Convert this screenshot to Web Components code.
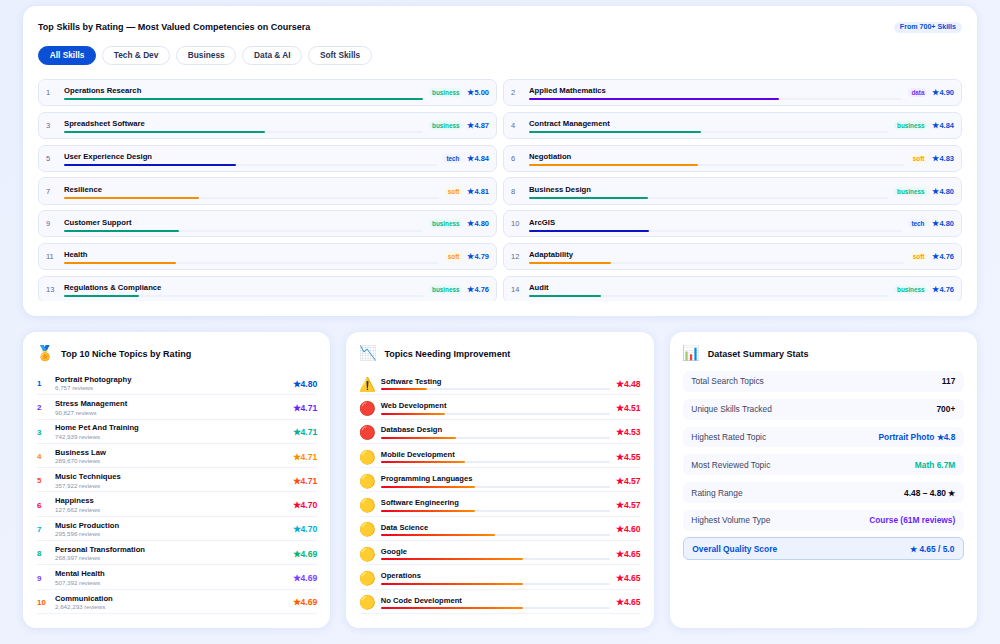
<!DOCTYPE html>
<html>
<head>
<meta charset="utf-8">
<style>
html, body { margin: 0; height: 100%; overflow: hidden; }
body {
    background: linear-gradient(135deg, #eaf0fd, #f0f4ff);
    font-family: "Liberation Sans", Arial, sans-serif;
    color: #0a0a23;
    padding: 6px 23px 0;
    box-sizing: border-box;
}
.bottom {
    display: grid;
    grid-template-columns: repeat(3, 1fr);
    gap: 16px;
    margin-top: 16px;
}
stat-row:first-child { margin-top: 1.5px; }
</style>
</head>
<body>
<skills-panel></skills-panel>
<div class="bottom">
    <info-card icon="🏅" heading="Top 10 Niche Topics by Rating" id="niche"></info-card>
    <info-card icon="📉" heading="Topics Needing Improvement" id="weak"></info-card>
    <info-card icon="📊" heading="Dataset Summary Stats" id="stats"></info-card>
</div>

<script>
const BLUE = '#0050d8'
const KINDS = {
    business: { bar: '#009e7c', text: '#00b894', bg: '#e8faf5' },
    tech: { bar: '#0a14c4', text: '#0050d8', bg: '#eef3fe' },
    data: { bar: '#5c00e6', text: '#7c2fff', bg: '#f3edff' },
    soft: { bar: '#f58e00', text: '#ff9800', bg: '#fff8e8' },
}

const SKILLS = [
    ['Operations Research', 'business', '5.00', 100],
    ['Applied Mathematics', 'data', '4.90', 67],
    ['Spreadsheet Software', 'business', '4.87', 56],
    ['Contract Management', 'business', '4.84', 48],
    ['User Experience Design', 'tech', '4.84', 46],
    ['Negotiation', 'soft', '4.83', 45],
    ['Resilience', 'soft', '4.81', 36],
    ['Business Design', 'business', '4.80', 33],
    ['Customer Support', 'business', '4.80', 32],
    ['ArcGIS', 'tech', '4.80', 32],
    ['Health', 'soft', '4.79', 30],
    ['Adaptability', 'soft', '4.76', 22],
    ['Regulations & Compliance', 'business', '4.76', 21],
    ['Audit', 'business', '4.76', 20],
]

const NICHE = [
    ['Portrait Photography', '6,757', '4.80', '#0050d8'],
    ['Stress Management', '90,827', '4.71', '#6a1fff'],
    ['Home Pet And Training', '742,939', '4.71', '#00b09b'],
    ['Business Law', '289,670', '4.71', '#ff8c00'],
    ['Music Techniques', '357,922', '4.71', '#ff4d1f'],
    ['Happiness', '127,662', '4.70', '#ff0033'],
    ['Music Production', '295,596', '4.70', '#00acd7'],
    ['Personal Transformation', '268,997', '4.69', '#00b37a'],
    ['Mental Health', '507,392', '4.69', '#7c3fff'],
    ['Communication', '2,642,293', '4.69', '#ff5a00'],
]

const WEAK = [
    ['⚠️', 'Software Testing', '4.48', 20],
    ['🔴', 'Web Development', '4.51', 28],
    ['🔴', 'Database Design', '4.53', 33],
    ['🟡', 'Mobile Development', '4.55', 37],
    ['🟡', 'Programming Languages', '4.57', 41],
    ['🟡', 'Software Engineering', '4.57', 41],
    ['🟡', 'Data Science', '4.60', 50],
    ['🟡', 'Google', '4.65', 62],
    ['🟡', 'Operations', '4.65', 62],
    ['🟡', 'No Code Development', '4.65', 62],
]

const STATS = [
    ['Total Search Topics', '117', '#0a0a23'],
    ['Unique Skills Tracked', '700+', '#0a0a23'],
    ['Highest Rated Topic', 'Portrait Photo ★4.8', BLUE],
    ['Most Reviewed Topic', 'Math 6.7M', '#00b894'],
    ['Rating Range', '4.48 – 4.80 ★', '#0a0a23'],
    ['Highest Volume Type', 'Course (61M reviews)', '#6a1fff'],
]

class TabPill extends HTMLElement {
    constructor() {
        super()
        this.root = this.attachShadow({mode: 'open'})
    }
    connectedCallback() {
        this.root.innerHTML = `
            <style>
            :host {
                display: block;
                height: 19px;
                line-height: 17px;
                padding: 0 10.8px;
                border: 1px solid #dfe5f5;
                border-radius: 10px;
                box-sizing: border-box;
                font-size: 8.3px;
                font-weight: 700;
                color: #2a3458;
                background: #fff;
            }
            :host([active]) { background: #0a4fd6; border-color: #0a4fd6; color: #fff; }
            </style>
            <slot></slot>
        `
    }
}

class SkillRow extends HTMLElement {
    constructor() {
        super()
        this.root = this.attachShadow({mode: 'open'})
    }
    connectedCallback() {
        const kind = KINDS[this.getAttribute('kind')]
        this.root.innerHTML = `
            <style>
            :host {
                display: flex;
                align-items: center;
                height: 27.3px;
                box-sizing: border-box;
                padding: 0 7px;
                border: 1px solid #e2e7f6;
                border-radius: 7px;
                background: #f8f9ff;
            }
            .num { width: 18px; flex: none; font-size: 7.5px; color: #5a6a92; }
            .main { flex: 1; min-width: 0; padding-top: 1.5px; }
            .name { font-size: 7.7px; font-weight: 700; line-height: 10px; color: #0a0a23; margin-bottom: 2px; }
            .track { height: 2px; border-radius: 2px; background: #eef1fb; }
            .fill { height: 100%; border-radius: 2px; background: ${kind.bar}; width: ${this.getAttribute('pct')}%; }
            .tag {
                flex: none;
                margin-left: 6px;
                padding: 0 3px;
                height: 9px;
                line-height: 9px;
                font-size: 6.3px;
                font-weight: 700;
                border-radius: 5px;
                color: ${kind.text};
                background: ${kind.bg};
            }
            .rate { flex: none; margin-left: 5px; font-size: 7.5px; font-weight: 700; color: ${BLUE}; }
            </style>
            <span class="num">${this.getAttribute('num')}</span>
            <div class="main">
                <div class="name"><slot></slot></div>
                <div class="track"><div class="fill"></div></div>
            </div>
            <span class="tag">${this.getAttribute('kind')}</span>
            <span class="rate">★${this.getAttribute('rate')}</span>
        `
    }
}

class SkillsPanel extends HTMLElement {
    constructor() {
        super()
        this.root = this.attachShadow({mode: 'open'})
    }
    connectedCallback() {
        const tabs = ['All Skills', 'Tech & Dev', 'Business', 'Data & AI', 'Soft Skills']
        this.root.innerHTML = `
            <style>
            :host {
                display: block;
                height: 310px;
                box-sizing: border-box;
                padding: 15px;
                background: #fff;
                border-radius: 13px;
                box-shadow: 0 1px 8px rgba(10, 71, 214, .09);
            }
            .head { display: flex; justify-content: space-between; align-items: center; height: 12px; }
            h2 { margin: 0; font-size: 9.04px; font-weight: 700; color: #0a0a23; }
            .badge {
                font-size: 7.1px;
                font-weight: 700;
                color: ${BLUE};
                background: #ebf2fe;
                border-radius: 6px;
                padding: 0 6px;
                line-height: 11px;
            }
            .tabs { display: flex; gap: 5.8px; margin-top: 13px; }
            .list {
                margin-top: 14px;
                height: 222px;
                overflow: hidden;
                display: grid;
                grid-template-columns: 1fr 1fr;
                gap: 5.5px 6px;
                align-content: start;
            }
            </style>
            <div class="head">
                <h2>Top Skills by Rating — Most Valued Competencies on Coursera</h2>
                <span class="badge">From 700+ Skills</span>
            </div>
            <div class="tabs">
                ${tabs.map((t, i) => `<tab-pill ${i === 0 ? 'active' : ''}>${t.replace('&', '&amp;')}</tab-pill>`).join('')}
            </div>
            <div class="list">
                ${SKILLS.map((s, i) => `<skill-row num="${i + 1}" kind="${s[1]}" rate="${s[2]}" pct="${s[3]}">${s[0].replace('&', '&amp;')}</skill-row>`).join('')}
            </div>
        `
    }
}

class InfoCard extends HTMLElement {
    constructor() {
        super()
        this.root = this.attachShadow({mode: 'open'})
    }
    connectedCallback() {
        this.root.innerHTML = `
            <style>
            :host {
                display: block;
                height: 296px;
                box-sizing: border-box;
                padding: 13px 13px 0;
                background: #fff;
                border-radius: 13px;
                box-shadow: 0 1px 8px rgba(10, 71, 214, .09);
            }
            .head { display: flex; align-items: center; gap: 7px; height: 18px; margin-bottom: 8px; }
            .icon { font-size: 14.5px; line-height: 18px; font-family: "Noto Color Emoji", sans-serif; }
            h3 { margin: 0; font-size: 9.04px; font-weight: 700; color: #0a0a23; }
            </style>
            <div class="head">
                <span class="icon">${this.getAttribute('icon')}</span>
                <h3>${this.getAttribute('heading')}</h3>
            </div>
            <slot></slot>
        `
    }
}

class NicheRow extends HTMLElement {
    constructor() {
        super()
        this.root = this.attachShadow({mode: 'open'})
    }
    connectedCallback() {
        const color = this.getAttribute('color')
        this.root.innerHTML = `
            <style>
            :host {
                display: flex;
                align-items: center;
                height: 24.3px;
                box-sizing: border-box;
                padding-top: 2px;
                border-bottom: 1px solid #f0f3fb;
                margin-left: 1px;
            }
            .num { width: 18px; flex: none; font-size: 8px; font-weight: 700; color: ${color}; }
            .main { flex: 1; min-width: 0; }
            .name { font-size: 7.65px; font-weight: 700; line-height: 8.5px; color: #0a0a23; }
            .sub { font-size: 6.2px; line-height: 7px; color: #8a94ae; }
            .rate { flex: none; font-size: 8.6px; font-weight: 700; color: ${color}; }
            </style>
            <span class="num">${this.getAttribute('num')}</span>
            <div class="main">
                <div class="name"><slot></slot></div>
                <div class="sub">${this.getAttribute('reviews')} reviews</div>
            </div>
            <span class="rate">★${this.getAttribute('rate')}</span>
        `
    }
}

class WeakRow extends HTMLElement {
    constructor() {
        super()
        this.root = this.attachShadow({mode: 'open'})
    }
    connectedCallback() {
        this.root.innerHTML = `
            <style>
            :host {
                display: flex;
                align-items: center;
                height: 24.3px;
                box-sizing: border-box;
                padding-top: 2px;
                border-bottom: 1px solid #f0f3fb;
            }
            .icon { width: 21.5px; flex: none; font-size: 13.5px; line-height: 16px; font-family: "Noto Color Emoji", sans-serif; }
            .main { flex: 1; min-width: 0; }
            .name { font-size: 7.6px; font-weight: 700; line-height: 10px; color: #0a0a23; margin-bottom: 1.5px; }
            .track { height: 2px; border-radius: 2px; background: #e9eefb; }
            .fill { height: 100%; border-radius: 2px; width: ${this.getAttribute('pct')}%; background: linear-gradient(90deg, #ee0022, #ff8c00); }
            .rate { flex: none; width: 25px; margin-left: 6px; text-align: right; white-space: nowrap; font-size: 8.6px; font-weight: 700; color: #ff0033; }
            </style>
            <span class="icon">${this.getAttribute('icon')}</span>
            <div class="main">
                <div class="name"><slot></slot></div>
                <div class="track"><div class="fill"></div></div>
            </div>
            <span class="rate">★${this.getAttribute('rate')}</span>
        `
    }
}

class StatRow extends HTMLElement {
    constructor() {
        super()
        this.root = this.attachShadow({mode: 'open'})
    }
    connectedCallback() {
        this.root.innerHTML = `
            <style>
            :host {
                display: flex;
                justify-content: space-between;
                align-items: center;
                height: 20.8px;
                box-sizing: border-box;
                padding: 0 8.7px;
                margin-bottom: 7px;
                border-radius: 6px;
                background: #f8f9ff;
                font-size: 8.4px;
            }
            :host([total]) {
                height: 23px;
                background: #edf3fe;
                border: 1px solid #bcd2f7;
                color: ${BLUE};
                font-weight: 700;
                margin-top: -0.5px;
            }
            .label { color: #3a4468; }
            :host([total]) .label { color: ${BLUE}; }
            .value { font-weight: 700; color: ${this.getAttribute('color') || BLUE}; }
            </style>
            <span class="label"><slot></slot></span>
            <span class="value">${this.getAttribute('value')}</span>
        `
    }
}

customElements.define('tab-pill', TabPill)
customElements.define('skill-row', SkillRow)
customElements.define('skills-panel', SkillsPanel)
customElements.define('info-card', InfoCard)
customElements.define('niche-row', NicheRow)
customElements.define('weak-row', WeakRow)
customElements.define('stat-row', StatRow)

document.getElementById('niche').innerHTML = NICHE.map((n, i) =>
    `<niche-row num="${i + 1}" reviews="${n[1]}" rate="${n[2]}" color="${n[3]}">${n[0]}</niche-row>`).join('')
document.getElementById('weak').innerHTML = WEAK.map(w =>
    `<weak-row icon="${w[0]}" rate="${w[2]}" pct="${w[3]}">${w[1]}</weak-row>`).join('')
document.getElementById('stats').innerHTML = STATS.map(s =>
    `<stat-row value="${s[1]}" color="${s[2]}">${s[0]}</stat-row>`).join('') +
    `<stat-row total value="★ 4.65 / 5.0">Overall Quality Score</stat-row>`
</script>
</body>
</html>
